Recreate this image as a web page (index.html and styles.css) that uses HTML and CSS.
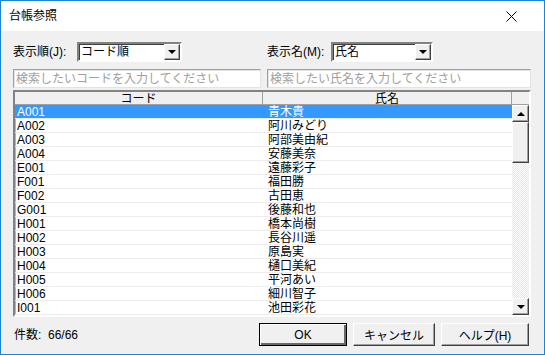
FILE: index.html
```html
<!DOCTYPE html>
<html lang="ja">
<head>
  <meta charset="UTF-8">
  <title>台帳参照</title>
  <link rel="stylesheet" href="styles.css">
</head>
<body>
  <div class="window">
    <div class="titlebar">
      <span class="title">台帳参照</span>
      <span class="close">
        <svg width="11" height="11" viewBox="0 0 11 11"><path d="M0.5 0.5L10.5 10.5M10.5 0.5L0.5 10.5" stroke="#000" stroke-width="1"/></svg>
      </span>
    </div>
    <div class="content">
      <div class="filters">
        <div class="field">
          <label>表示順(J):</label>
          <div class="combo combo--order"><span class="combo__text">コード順</span><span class="combo__drop"><i class="tri-down"></i></span></div>
        </div>
        <div class="field field--right">
          <label>表示名(M):</label>
          <div class="combo combo--name"><span class="combo__text">氏名</span><span class="combo__drop"><i class="tri-down"></i></span></div>
        </div>
      </div>
      <div class="search">
        <input type="text" placeholder="検索したいコードを入力してください">
        <input type="text" placeholder="検索したい氏名を入力してください">
      </div>
      <div class="grid">
        <div class="grid__head">
          <div class="head-cell head-code">コード</div>
          <div class="head-cell head-name">氏名</div>
          <div class="head-cell head-pad"></div>
        </div>
        <div class="grid__body">
          <div class="rows">
            <div class="row row--selected"><div class="cell-code">A001</div><div class="cell-name">青木貴</div></div>
            <div class="row"><div class="cell-code">A002</div><div class="cell-name">阿川みどり</div></div>
            <div class="row"><div class="cell-code">A003</div><div class="cell-name">阿部美由紀</div></div>
            <div class="row"><div class="cell-code">A004</div><div class="cell-name">安藤美奈</div></div>
            <div class="row"><div class="cell-code">E001</div><div class="cell-name">遠藤彩子</div></div>
            <div class="row"><div class="cell-code">F001</div><div class="cell-name">福田勝</div></div>
            <div class="row"><div class="cell-code">F002</div><div class="cell-name">古田恵</div></div>
            <div class="row"><div class="cell-code">G001</div><div class="cell-name">後藤和也</div></div>
            <div class="row"><div class="cell-code">H001</div><div class="cell-name">橋本尚樹</div></div>
            <div class="row"><div class="cell-code">H002</div><div class="cell-name">長谷川遥</div></div>
            <div class="row"><div class="cell-code">H003</div><div class="cell-name">原島実</div></div>
            <div class="row"><div class="cell-code">H004</div><div class="cell-name">樋口美紀</div></div>
            <div class="row"><div class="cell-code">H005</div><div class="cell-name">平河あい</div></div>
            <div class="row"><div class="cell-code">H006</div><div class="cell-name">細川智子</div></div>
            <div class="row"><div class="cell-code">I001</div><div class="cell-name">池田彩花</div></div>
          </div>
          <div class="vscroll">
            <div class="sb-btn"><i class="tri-up"></i></div>
            <div class="sb-thumb"></div>
            <div class="sb-track"></div>
            <div class="sb-btn"><i class="tri-down"></i></div>
          </div>
        </div>
      </div>
      <div class="footer">
        <span class="count">件数:&nbsp; 66/66</span>
        <div class="buttons">
          <button class="btn btn--default">OK</button>
          <button class="btn btn--cancel">キャンセル</button>
          <button class="btn">ヘルプ(H)</button>
        </div>
      </div>
    </div>
  </div>
</body>
</html>
```

FILE: styles.css
```css
body {
  margin: 0;
  font-family: "Liberation Sans", "Noto Sans CJK JP", sans-serif;
  font-size: 12px;
  color: #000;
}
.window {
  width: 545px;
  height: 355px;
  box-sizing: border-box;
  border: 1px solid #1a84d8;
  background-color: #f0f0f0;
  display: flex;
  flex-direction: column;
}
.titlebar {
  height: 30px;
  background-color: #fff;
  display: flex;
  align-items: center;
  justify-content: space-between;
  padding: 0 27px 0 8px;
}
.title {
  font-size: 12px;
  line-height: 14px;
}
.close {
  display: flex;
}
.content {
  padding: 0 12px;
  display: flex;
  flex-direction: column;
}
.filters {
  margin-top: 11px;
  display: grid;
  grid-template-columns: 248px 264px;
  column-gap: 6px;
  height: 20px;
}
.field {
  display: flex;
  align-items: center;
}
.field label {
  width: 64px;
  line-height: 14px;
}
.combo {
  height: 20px;
  box-sizing: border-box;
  background-color: #fff;
  border: 2px solid;
  border-color: #828282 #fff #fff #828282;
  box-shadow: inset 1px 1px 0 #404040;
  display: flex;
  align-items: center;
  justify-content: space-between;
}
.combo--order {
  width: 105px;
}
.combo--name {
  width: 102px;
}
.combo__text {
  padding-left: 2px;
  line-height: 14px;
}
.combo__drop {
  width: 16px;
  height: 16px;
  box-sizing: border-box;
  background-color: #f0f0f0;
  border: 1px solid;
  border-color: #fff #404040 #404040 #fff;
  box-shadow: inset -1px -1px 0 #a0a0a0;
  display: flex;
  align-items: center;
  justify-content: center;
}
.tri-down {
  width: 0;
  height: 0;
  border-left: 4px solid transparent;
  border-right: 4px solid transparent;
  border-top: 4px solid #000;
}
.tri-up {
  width: 0;
  height: 0;
  border-left: 4px solid transparent;
  border-right: 4px solid transparent;
  border-bottom: 4px solid #000;
}
.search {
  margin-top: 7px;
  display: grid;
  grid-template-columns: 248px 264px;
  column-gap: 6px;
}
.search input {
  height: 19px;
  box-sizing: border-box;
  margin: 0;
  padding: 0 2px;
  font-family: "Liberation Sans", "Noto Sans CJK JP", sans-serif;
  font-size: 12px;
  background-color: #fff;
  border: 1px solid;
  border-color: #a0a0a0 #e3e3e3 #e3e3e3 #a0a0a0;
  box-shadow: inset 1px 1px 0 #e3e3e3;
  outline: none;
}
.search input::placeholder {
  color: #a0a0a0;
}
.grid {
  margin-top: 2px;
  width: 518px;
  height: 227px;
  box-sizing: border-box;
  border: 2px solid;
  border-color: #828282 #fff #fff #828282;
  box-shadow: inset 1px 1px 0 #b4b4b4;
  background-color: #fff;
  display: flex;
  flex-direction: column;
}
.grid__head {
  display: flex;
  height: 13px;
  background-color: #f0f0f0;
}
.head-cell {
  box-sizing: border-box;
  height: 13px;
  padding-top: 1px;
  border-right: 1px solid #a0a0a0;
  border-bottom: 1px solid #a0a0a0;
  text-align: center;
  line-height: 12px;
}
.head-code {
  width: 248px;
}
.head-name {
  width: 249px;
}
.head-pad {
  width: 17px;
  border-right: none;
}
.grid__body {
  display: flex;
  height: 210px;
}
.rows {
  width: 497px;
}
.row {
  display: flex;
  height: 14px;
  box-sizing: border-box;
  border-bottom: 1px solid #ececec;
}
.row--selected {
  background-color: #3399ff;
  color: #fff;
}
.cell-code, .cell-name {
  padding-top: 1px;
  line-height: 13px;
}
.cell-code {
  width: 248px;
  padding-left: 2px;
}
.cell-name {
  padding-left: 3px;
}
.vscroll {
  width: 17px;
  display: flex;
  flex-direction: column;
}
.sb-btn, .sb-thumb {
  box-sizing: border-box;
  background-color: #f0f0f0;
  border: 1px solid;
  border-color: #fff #404040 #404040 #fff;
  box-shadow: inset -1px -1px 0 #a0a0a0;
}
.sb-btn {
  height: 17px;
  display: flex;
  align-items: center;
  justify-content: center;
}
.sb-thumb {
  height: 41px;
}
.sb-track {
  flex: 1;
  background: repeating-conic-gradient(#fff 0 25%, #e6e6e6 0 50%) 0 0 / 2px 2px;
}
.footer {
  margin-top: 6px;
  display: flex;
  align-items: center;
  justify-content: space-between;
  width: 516px;
}
.count {
  padding-left: 1px;
  line-height: 14px;
}
.buttons {
  display: flex;
  gap: 6px;
}
.btn {
  width: 88px;
  height: 23px;
  box-sizing: border-box;
  padding: 0;
  font-family: "Liberation Sans", "Noto Sans CJK JP", sans-serif;
  font-size: 12px;
  color: #000;
  background-color: #f0f0f0;
  border: 1px solid;
  border-color: #fff #404040 #404040 #fff;
  box-shadow: inset -1px -1px 0 #a0a0a0;
}
.btn--cancel {
  width: 82px;
}
.btn--default {
  border: 1px solid #000;
  box-shadow: inset 1px 1px 0 #fff, inset -2px -2px 0 #696969;
}
```
